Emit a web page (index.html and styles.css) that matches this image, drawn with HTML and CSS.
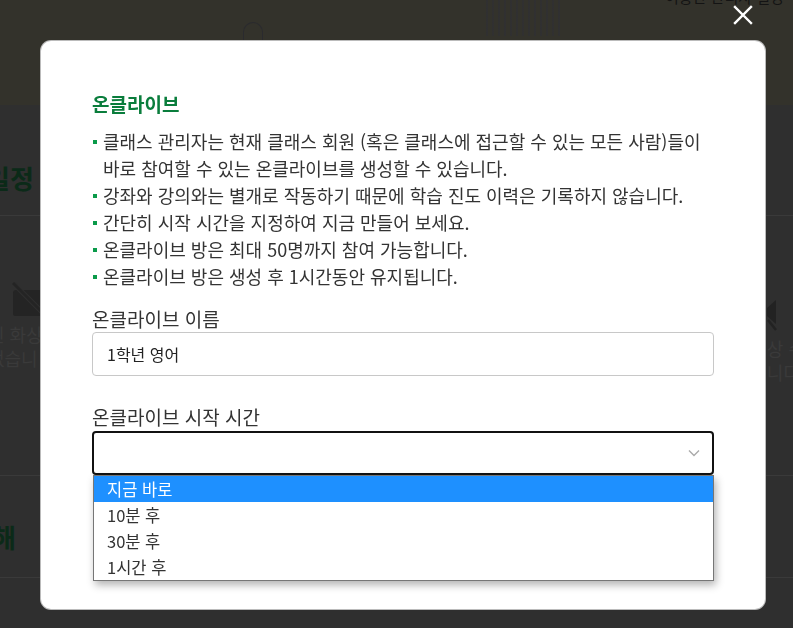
FILE: index.html
```html
<!DOCTYPE html>
<html lang="ko">
<head>
<meta charset="utf-8">
<link rel="stylesheet" href="styles.css">
</head>
<body>
<div class="page">
  <div class="top-band">
    <div class="band-pattern"></div>
    <div class="band-arc"></div>
    <span class="band-text">이용한 관리자 설정</span>
  </div>
  <section class="sec sec-schedule">
    <h2 class="sec-title">일정</h2>
  </section>
  <section class="sec sec-empty">
    <div class="empty-left">
      <svg class="cam-icon" width="34" height="36" viewBox="0 0 34 36"><path d="M6 8 H34 V34 H3 Q1 34 1 32 V11 Q1 8 4 8 Z" fill="#242424"/><path d="M0 0 L34 34" stroke="#2f2f2f" stroke-width="5"/><path d="M1 1 L31 31" stroke="#242424" stroke-width="3"/></svg>
      <p>된 화상<br>없습니</p>
    </div>
    <div class="empty-right">
      <svg class="cam-icon-r" width="10" height="32" viewBox="0 0 10 32"><path d="M9 0 V24 L0 16 V8 Z" fill="#222"/><path d="M1 20 L9 30" stroke="#222" stroke-width="2.5"/></svg>
      <p>상 수<br>니다.</p>
    </div>
  </section>
  <section class="sec sec-next">
    <h2 class="sec-title">해</h2>
  </section>
</div>

<button class="close" aria-label="닫기">
  <svg width="20" height="20" viewBox="0 0 20 20"><path d="M2 2 L18 18 M18 2 L2 18" stroke="#fff" stroke-width="2.4" stroke-linecap="square"/></svg>
</button>

<div class="modal">
  <h1 class="modal-title">온클라이브</h1>
  <ul class="notes">
    <li>클래스 관리자는 현재 클래스 회원 (혹은 클래스에 접근할 수 있는 모든 사람)들이 바로 참여할 수 있는 온클라이브를 생성할 수 있습니다.</li>
    <li>강좌와 강의와는 별개로 작동하기 때문에 학습 진도 이력은 기록하지 않습니다.</li>
    <li>간단히 시작 시간을 지정하여 지금 만들어 보세요.</li>
    <li>온클라이브 방은 최대 50명까지 참여 가능합니다.</li>
    <li>온클라이브 방은 생성 후 1시간동안 유지됩니다.</li>
  </ul>
  <label class="field-label">온클라이브 이름</label>
  <div class="input">1학년 영어</div>
  <label class="field-label second">온클라이브 시작 시간</label>
  <div class="select-wrap">
    <div class="select">
      <svg class="chev" width="12" height="8" viewBox="0 0 12 8"><path d="M1 1.5 L6 6.5 L11 1.5" fill="none" stroke="#aaa" stroke-width="1.4"/></svg>
    </div>
    <ul class="options">
      <li class="active">지금 바로</li>
      <li>10분 후</li>
      <li>30분 후</li>
      <li>1시간 후</li>
    </ul>
  </div>
</div>
</body>
</html>
```
FILE: styles.css
```css
* { box-sizing: border-box; }
html, body { margin: 0; padding: 0; }
body {
  width: 793px;
  height: 628px;
  overflow: hidden;
  background: #2f2f2f;
  font-family: "Noto Sans CJK KR", "Noto Sans", sans-serif;
  color: #333;
}
.page { display: flex; flex-direction: column; }
.top-band {
  height: 105px;
  background: #33322b;
  position: relative;
}
.band-pattern {
  position: absolute;
  left: 486px; top: 0;
  width: 78px; height: 36px;
  background: repeating-linear-gradient(90deg, #2f2f33 0 2px, transparent 2px 6px);
  opacity: .7;
}
.band-arc {
  position: absolute;
  left: 243px; top: 22px;
  width: 20px; height: 30px;
  border: 1px solid #2a2a2e;
  border-bottom: 0;
  border-radius: 10px 10px 0 0;
}
.band-text {
  position: absolute;
  left: 665px; top: -14px;
  font-size: 15px;
  color: #141414;
}
.sec { border-bottom: 1px solid #3a3a3a; }
.sec-title {
  margin: 0;
  font-size: 26px;
  font-weight: 700;
  color: #0b2a18;
}
.sec-schedule { height: 111px; padding: 54px 0 0 0; }
.sec-schedule .sec-title { margin-left: -14px; }
.sec-empty {
  height: 260px;
  display: flex;
  justify-content: space-between;
}
.empty-left { padding-top: 66px; margin-left: -12px; }
.empty-left p, .empty-right p {
  margin: 4px 0 0 0;
  font-size: 18px;
  line-height: 24px;
  color: #3a3a3a;
}
.cam-icon { display: block; margin-left: 24px; }
.empty-right { padding-top: 84px; margin-right: -12px; }
.cam-icon-r { display: block; margin-left: 0; }
.sec-next { height: 102px; padding-top: 42px; }
.sec-next .sec-title { margin-left: -8px; }

.close {
  position: fixed;
  left: 733px; top: 5px;
  width: 20px; height: 20px;
  padding: 0; border: 0;
  background: none;
}
.close svg { display: block; }

.modal {
  position: fixed;
  left: 41px; top: 41px;
  width: 724px; height: 568px;
  background: #fff;
  border-radius: 10px;
  box-shadow: 0 0 0 1px #bbb;
  padding: 49px 51px 0 51px;
}
.modal-title {
  margin: 0;
  font-size: 19px;
  font-weight: 700;
  line-height: 28px;
  color: #0a7d3c;
}
.notes {
  list-style: none;
  margin: 10px 0 0 0;
  padding: 0;
}
.notes li {
  position: relative;
  padding-left: 11px;
  font-size: 18px;
  line-height: 27px;
  color: #333;
}
.notes li::before {
  content: "";
  position: absolute;
  left: 1px; top: 12px;
  width: 4px; height: 4px;
  background: #0a9a4a;
}
.field-label {
  display: block;
  margin-top: 16px;
  font-size: 19px;
  line-height: 26px;
  color: #333;
}
.field-label.second { margin-top: 28px; }
.input {
  height: 44px;
  margin-top: 0;
  border: 1px solid #c8c8c8;
  border-radius: 4px;
  padding: 0 14px;
  font-size: 16px;
  line-height: 42px;
  color: #222;
}
.select-wrap { position: relative; margin-top: 1px; }
.select {
  height: 44px;
  border: 2px solid #111;
  border-radius: 4px;
  display: flex;
  align-items: center;
  justify-content: flex-end;
  padding-right: 12px;
}
.options {
  position: absolute;
  left: 1px; right: 0; top: 44px;
  margin: 0; padding: 0;
  list-style: none;
  background: #fff;
  border: 1px solid #767676;
  box-shadow: 2px 4px 8px rgba(0,0,0,.3);
}
.options li {
  height: 26px;
  padding-left: 13px;
  font-size: 16.5px;
  line-height: 26px;
  color: #333;
}
.options li.active { background: #1e90ff; color: #fff; }
```
